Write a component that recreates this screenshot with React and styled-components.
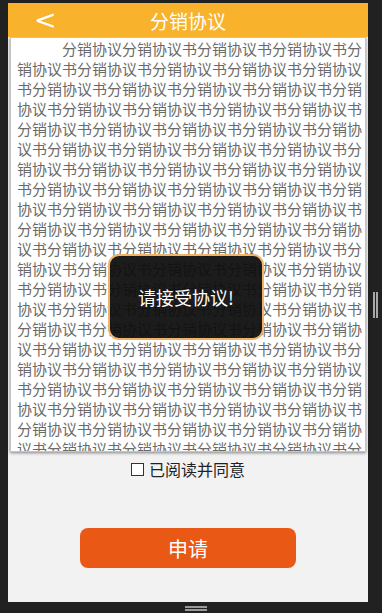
import React from 'react';
import styled, { createGlobalStyle } from 'styled-components';

const GlobalStyle = createGlobalStyle`
  html, body {
    margin: 0;
    padding: 0;
    background: #212121;
    overflow: hidden;
  }
  * { box-sizing: border-box; }
`;

const Page = styled.div`
  display: flex;
  flex-direction: column;
  width: 382px;
  height: 613px;
  padding-top: 3px;
`;

const Row = styled.div`
  display: flex;
  height: 599px;
`;

const Screen = styled.div`
  position: relative;
  width: 360px;
  margin-left: 8px;
  display: flex;
  flex-direction: column;
  align-items: center;
  background: #f2f2f2;
  font-family: "Noto Sans CJK SC", "Noto Sans", sans-serif;
`;

const Gutter = styled.div`
  flex: 1;
  display: flex;
  align-items: center;
  justify-content: center;
  padding-top: 4px;
`;

const Grip = styled.div`
  width: 5px;
  height: 26px;
  border-left: 2px solid #a8a8a8;
  border-right: 2px solid #a8a8a8;
`;

const Header = styled.div`
  position: relative;
  width: 100%;
  height: 34px;
  flex-shrink: 0;
  display: flex;
  align-items: center;
  justify-content: center;
  background: #f8b22c;
  color: #fff;
  font-size: 19px;
`;

const Back = styled.span`
  position: absolute;
  left: 26px;
  top: 2px;
  font-family: "DejaVu Sans", sans-serif;
  font-size: 27px;
  line-height: 30px;
`;

const Agreement = styled.div`
  width: 356px;
  height: 415px;
  flex-shrink: 0;
  overflow: hidden;
  background: #fff;
  border: 1px solid #c4c4c4;
  box-shadow: 0 1px 3px rgba(0, 0, 0, 0.45);
  padding: 1px 2px 0 6px;
  color: #6a6a6a;
  font-size: 15px;
  line-height: 20px;
  text-indent: 3em;
  word-break: break-all;
`;

const Agree = styled.label`
  display: flex;
  align-items: center;
  gap: 5px;
  margin-top: 5px;
  height: 24px;
  color: #222;
  font-size: 16px;
`;

const Box = styled.span`
  width: 13px;
  height: 13px;
  border: 1px solid #333;
  background: #fff;
`;

const Submit = styled.button`
  margin-top: 47px;
  width: 216px;
  height: 40px;
  border: none;
  border-radius: 8px;
  background: #ea5816;
  color: #fff;
  font-family: inherit;
  font-size: 20px;
`;

const Toast = styled.div`
  position: absolute;
  left: 100px;
  top: 251px;
  width: 156px;
  height: 86px;
  display: flex;
  align-items: center;
  justify-content: center;
  background: rgba(14, 14, 14, 0.94);
  border: 2px solid #eeb366;
  border-radius: 11px;
  color: #fff;
  font-size: 18px;
`;

const Bottom = styled.div`
  flex: 1;
  display: flex;
  justify-content: center;
  padding: 4px 0 0 10px;
`;

const Handle = styled.div`
  width: 22px;
  height: 5px;
  border-top: 2px solid #9a9a9a;
  border-bottom: 2px solid #9a9a9a;
`;

const text = '分销协议' + '分销协议书'.repeat(100);

export default function App() {
  return (
    <>
      <GlobalStyle />
      <Page>
        <Row>
          <Screen>
            <Header>
              <Back>&lt;</Back>
              分销协议
            </Header>
            <Agreement>{text}</Agreement>
            <Agree>
              <Box />
              已阅读并同意
            </Agree>
            <Submit>申请</Submit>
            <Toast>请接受协议!</Toast>
          </Screen>
          <Gutter>
            <Grip />
          </Gutter>
        </Row>
        <Bottom>
          <Handle />
        </Bottom>
      </Page>
    </>
  );
}
